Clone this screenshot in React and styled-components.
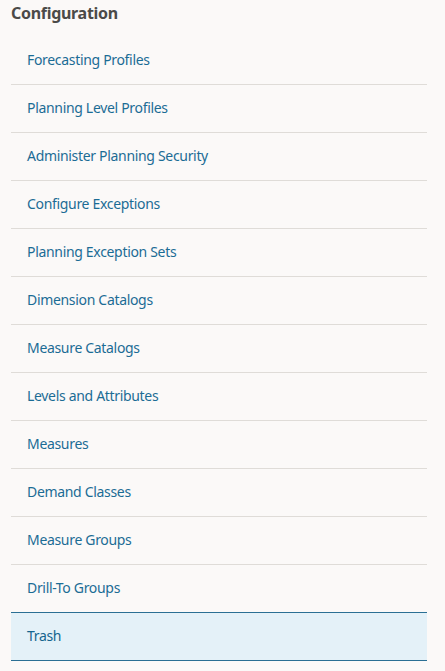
import React from "react";
import styled, { createGlobalStyle } from "styled-components";

const Global = createGlobalStyle`
  html, body { margin: 0; padding: 0; background: #fbf9f8; }
  body { font-family: "Noto Sans", "Open Sans", sans-serif; }
`;

const Panel = styled.nav`
  padding: 0 18px 0 11px;
  width: 445px;
  box-sizing: border-box;
`;

const Title = styled.h2`
  margin: 0;
  height: 37px;
  padding-top: 3px;
  box-sizing: border-box;
  font-size: 16px;
  font-weight: 700;
  letter-spacing: -0.3px;
  color: #4b4a48;
  line-height: 20px;
`;

const List = styled.ul`
  list-style: none;
  margin: 0;
  padding: 0;
`;

const Item = styled.li`
  height: 48px;
  box-sizing: border-box;
  display: flex;
  align-items: center;
  padding: 0 0 2px 16px;
  font-size: 14px;
  letter-spacing: -0.32px;
  color: ${(p) => (p.$selected ? "#15658e" : "#1b6c95")};
  background: ${(p) => (p.$selected ? "#e4f1f8" : "transparent")};
  border-bottom: 1px solid ${(p) => (p.$selected || p.$beforeSelected ? "#2a6f94" : "#dfdcd8")};
  cursor: pointer;
  &:last-child { border-bottom-color: ${(p) => (p.$selected ? "#2a6f94" : "transparent")}; }
`;

const items = [
  "Forecasting Profiles",
  "Planning Level Profiles",
  "Administer Planning Security",
  "Configure Exceptions",
  "Planning Exception Sets",
  "Dimension Catalogs",
  "Measure Catalogs",
  "Levels and Attributes",
  "Measures",
  "Demand Classes",
  "Measure Groups",
  "Drill-To Groups",
  "Trash",
];

export default function App() {
  const selected = "Trash";
  const selIdx = items.indexOf(selected);
  return (
    <>
      <Global />
      <Panel>
        <Title>Configuration</Title>
        <List>
          {items.map((t, i) => (
            <Item key={t} $selected={t === selected} $beforeSelected={i === selIdx - 1}>
              {t}
            </Item>
          ))}
        </List>
      </Panel>
    </>
  );
}
